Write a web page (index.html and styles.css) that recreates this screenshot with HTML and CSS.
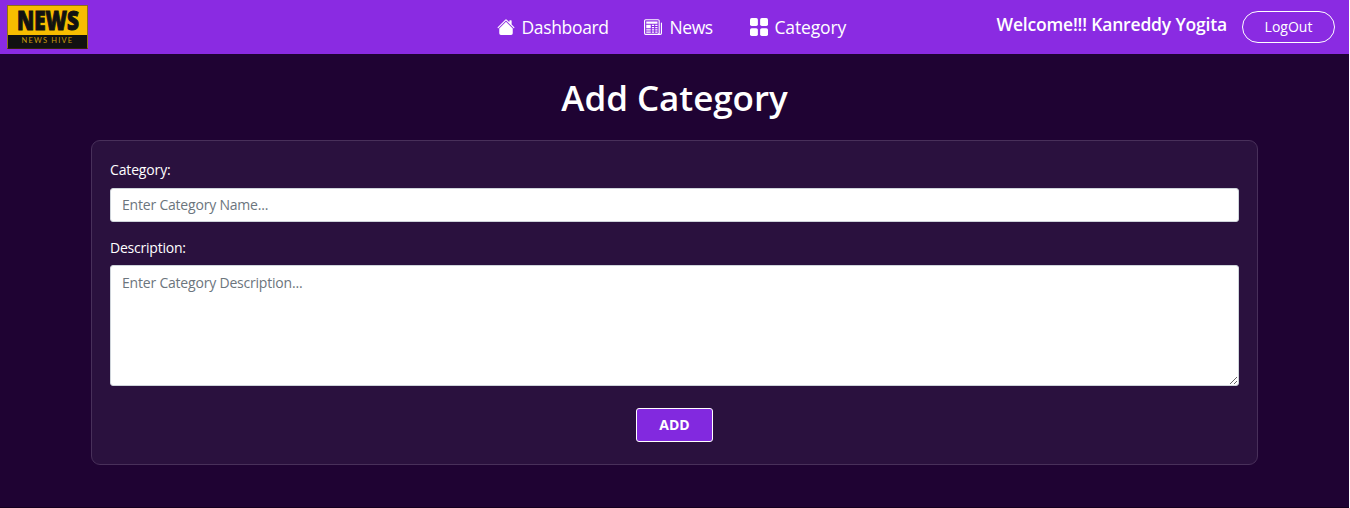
FILE: index.html
```html
<!DOCTYPE html>
<html lang="en">
<head>
<meta charset="utf-8">
<title>Add Category</title>
<link rel="stylesheet" href="styles.css">
</head>
<body>
<div class="page">
  <header class="navbar">
    <div class="logo"><div class="logo-top"><svg viewBox="0 0 79 29"><text x="9" y="23.500" textLength="62" lengthAdjust="spacingAndGlyphs">NEWS</text></svg></div><div class="logo-bottom"><span>NEWS HIVE</span></div></div>
    <nav class="links">
      <a class="link link-dashboard"><svg viewBox="0 0 16 16"><path d="M8.707 1.500a1 1 0 0 0-1.414 0L.646 8.146a.5.5 0 0 0 .708.708L8 2.207l6.646 6.647a.5.5 0 0 0 .708-.708L13 5.793V2.500a.5.5 0 0 0-.5-.5h-1a.5.5 0 0 0-.5.5v1.293z"/><path d="m8 3.293 6 6V13.500a1.500 1.500 0 0 1-1.500 1.500h-9A1.500 1.500 0 0 1 2 13.500V9.293z"/></svg><span>Dashboard</span></a>
      <a class="link link-news"><svg viewBox="0 0 16 16"><path d="M0 2.500A1.500 1.500 0 0 1 1.500 1h11A1.500 1.500 0 0 1 14 2.500v10.528c0 .3-.05.654-.238.972h.738a.5.5 0 0 0 .5-.5v-9a.5.5 0 0 1 1 0v9a1.500 1.500 0 0 1-1.500 1.500H1.497A1.497 1.497 0 0 1 0 13.500zM12 14c.37 0 .654-.211.853-.441.092-.106.147-.279.147-.531V2.500a.5.5 0 0 0-.5-.5h-11a.5.5 0 0 0-.5.5v11c0 .278.223.5.497.5z"/><path d="M2 3h10v2H2zm0 3h4v3H2zm0 4h4v1H2zm0 2h4v1H2zm5-6h2v1H7zm3 0h2v1h-2zM7 8h2v1H7zm3 0h2v1h-2zm-3 2h2v1H7zm3 0h2v1h-2zm-3 2h2v1H7zm3 0h2v1h-2z"/></svg><span>News</span></a>
      <a class="link link-category"><svg viewBox="0 0 16 16"><rect width="7" height="7" rx="1.500"/><rect x="9" width="7" height="7" rx="1.500"/><rect y="9" width="7" height="7" rx="1.500"/><rect x="9" y="9" width="7" height="7" rx="1.500"/></svg><span>Category</span></a>
    </nav>
    <div class="account"><span class="welcome">Welcome!!! Kanreddy Yogita</span><button class="logout">LogOut</button></div>
  </header>
  <main class="content">
    <h1 class="title"><span>Add Category</span></h1>
    <form class="card">
      <label class="label" for="name"><span>Category:</span></label>
      <input class="field" id="name" placeholder="Enter Category Name...">
      <label class="label label-description" for="description"><span>Description:</span></label>
      <textarea class="field area" id="description" placeholder="Enter Category Description..."></textarea>
      <button class="add" type="button">ADD</button>
    </form>
  </main>
</div>
</body>
</html>
```
FILE: styles.css
```css
* { box-sizing: border-box; }
body { margin: 0; background: #fff; color: #fff; font-family: "Open Sans", "Noto Sans", sans-serif; font-size: 14px; }
.page { width: 1349px; height: 508px; background: #1f0333; border-bottom: 1px solid #14001f; }
.navbar { display: grid; grid-template-columns: 1fr auto 1fr; height: 54px; background: #8a2be2; padding: 0 14px 0 7px; }
.logo { width: 81px; height: 44px; margin-top: 5px; border: 1px solid #8d7016; border-bottom-color: #33230a; background: #111; }
.logo-top { height: 29px; background: #f7bd00; }
.logo-top svg { display: block; width: 79px; height: 29px; overflow: visible; fill: #111; stroke: #111; stroke-width: 1px; font: 800 26px "Open Sans", sans-serif; }
.logo-bottom { display: flex; justify-content: center; color: #c99b0c; font: 7.5px/12px "Lato", sans-serif; letter-spacing: 1.2px; white-space: nowrap; }
.links { display: flex; gap: 36px; height: 54px; align-items: center; }
.link { display: flex; align-items: center; gap: 7px; font-size: 17.5px; line-height: 26px; white-space: nowrap; }
.link svg { flex: none; width: 18px; height: 18px; fill: #fff; }
.link-dashboard { width: 111px; letter-spacing: -.35px; }
.link-news { width: 70px; gap: 8px; letter-spacing: -.4px; }
.link-category { width: 96px; letter-spacing: -.15px; }
.account { display: flex; justify-content: flex-end; gap: 15px; padding-top: 11px; }
.welcome { font-size: 17.5px; font-weight: 600; line-height: 27px; letter-spacing: -.18px; white-space: nowrap; }
.logout { width: 93px; height: 32px; border: 1px solid #fff; border-radius: 16px; background: transparent; color: #fff; font: 14px/20px "Open Sans", sans-serif; padding: 0; }
.content { padding: 22px 91px 0; }
.title { margin: 0 0 20px; text-align: center; font-size: 35px; font-weight: 600; line-height: 44px; letter-spacing: -.05px; }
.card { display: flex; flex-direction: column; width: 1167px; height: 325px; padding: 18px; border: 1px solid #48305a; border-radius: 9px; background: #2a113e; }
.label { font-size: 14px; line-height: 21px; height: 29px; letter-spacing: -.15px; font-weight: 500; }
.label-description { height: 28px; margin-top: 15px; letter-spacing: -.22px; }
.field { width: 1129px; height: 34px; margin: 0; padding: 4px 11px 6px; border: 1px solid #ced4da; border-radius: 3px; background: #fff; color: #212529; font: 14px/21px "Open Sans", sans-serif; letter-spacing: -.2px; outline: none; }
.field::placeholder { color: #6c757d; opacity: 1; }
.area { height: 121px; padding-top: 6px; resize: vertical; }
.add { width: 77px; height: 34px; margin: 22px auto 0; border: 1px solid #fff; border-radius: 3px; background: #8229df; color: #fff; font: 700 14px/20px "Open Sans", sans-serif; padding: 0 0 1px; }
```
